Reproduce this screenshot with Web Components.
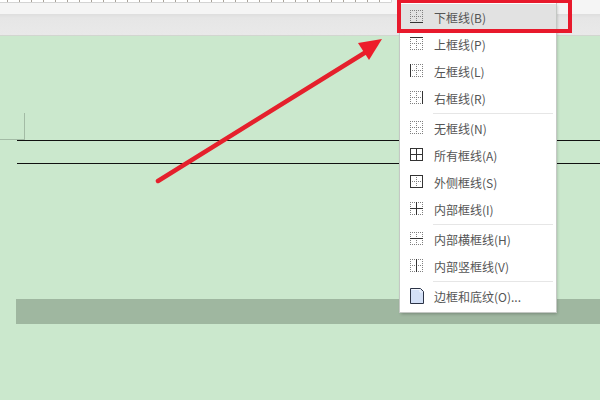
<!DOCTYPE html>
<html lang="zh">
<head>
<meta charset="utf-8">
<style>
  html, body { margin: 0; width: 600px; height: 400px; overflow: hidden; background: #cbe8cd; }
</style>
</head>
<body>
<word-window></word-window>

<script>
// Small border glyph: dotted grid, with the named edges drawn solid
class BorderIcon extends HTMLElement {
    connectedCallback() {
        let solid = (this.getAttribute('solid') || '').split(' ');
        let lines = {
            t: 'M0 .5H13', m: 'M0 6.5H13', b: 'M0 12.5H13',
            l: 'M.5 0V13', c: 'M6.5 0V13', r: 'M12.5 0V13'
        };
        let dotted = '';
        let full = '';
        for (let key in lines) {
            if (solid.includes(key)) {
                full += `<path d="${lines[key]}" stroke="#333" fill="none"/>`;
            } else {
                dotted += `<path d="${lines[key]}" stroke="#808080" stroke-dasharray="1 1" fill="none"/>`;
            }
        }
        let shadowDom = this.attachShadow({ mode: 'open' });
        shadowDom.innerHTML = `
            <style>
                :host { display: block; width: 13px; height: 13px; }
                svg { display: block; }
            </style>
            <svg width="13" height="13" viewBox="0 0 13 13" shape-rendering="crispEdges">${dotted}${full}</svg>`;
    }
}
customElements.define('border-icon', BorderIcon);

const itemTemplate = document.createElement('template');
itemTemplate.innerHTML = `
    <style>
        :host {
            display: flex;
            align-items: center;
            height: 27px;
            padding-left: 10px;
            box-sizing: border-box;
            color: #555;
        }
        :host([active]) { background: #e2e2e2; }
        .icon { width: 24px; flex: none; margin-top: -2px; }
    </style>
    <div class="icon"><slot name="icon"></slot></div>
    <span><slot></slot></span>`;

class MenuItem extends HTMLElement {
    constructor() {
        super();
        this.attachShadow({ mode: 'open' }).appendChild(itemTemplate.content.cloneNode(true));
    }
}
customElements.define('menu-item', MenuItem);

class MenuSeparator extends HTMLElement {
    constructor() {
        super();
        this.attachShadow({ mode: 'open' }).innerHTML = `
            <style>
                :host { display: block; height: 1px; margin: 1px 3px 1px 33px; background: #e6e6e6; }
            </style>`;
    }
}
customElements.define('menu-separator', MenuSeparator);

const menuTemplate = document.createElement('template');
menuTemplate.innerHTML = `
    <style>
        :host {
            position: absolute;
            left: 400px;
            top: 3px;
            width: 156px;
            height: 309px;
            box-sizing: border-box;
            padding-top: 1px;
            background: #fff;
            box-shadow: 0 0 0 1px #c4c8c4, 1px 2px 3px rgba(0,0,0,.25);
            font: 12px "Noto Sans CJK SC", "Liberation Sans", sans-serif;
        }
    </style>
    <slot></slot>`;

class BorderMenu extends HTMLElement {
    constructor() {
        super();
        this.attachShadow({ mode: 'open' }).appendChild(menuTemplate.content.cloneNode(true));
    }
}
customElements.define('border-menu', BorderMenu);

class RibbonBar extends HTMLElement {
    constructor() {
        super();
        this.attachShadow({ mode: 'open' }).innerHTML = `
            <style>
                :host { display: block; height: 36px; background: #f5f5f5; box-sizing: border-box; border-bottom: 1px solid #d2d6d0; }
                .ruler {
                    width: 392px;
                    height: 3px;
                    box-sizing: border-box;
                    border: solid #d4d4d4;
                    border-width: 0 1px 1px 0;
                    border-bottom-right-radius: 2px;
                    background: repeating-linear-gradient(90deg, #fff 0 7px, #a9a39a 7px 8px, #fff 8px 12px);
                }
                .tools { height: 11px; }
                .strip { height: 21px; background: linear-gradient(#dedede, #e6e6e6 4px, #e9e9e9); }
            </style>
            <div class="ruler"></div>
            <div class="tools"></div>
            <div class="strip"></div>`;
    }
}
customElements.define('ribbon-bar', RibbonBar);

class DocSheet extends HTMLElement {
    constructor() {
        super();
        this.attachShadow({ mode: 'open' }).innerHTML = `
            <style>
                :host { display: block; height: 364px; padding-top: 77px; box-sizing: border-box; background: #cbe8cd; }
                .corner { width: 24px; height: 26px; border: solid #a3bba5; border-width: 0 1px 1px 0; }
                .rows { height: 22px; margin-left: 17px; border: solid #111; border-width: 1px 0; }
                .band { height: 25px; margin: 135px 0 0 16px; background: #9fb7a0; }
            </style>
            <div class="corner"></div>
            <div class="rows"></div>
            <div class="band"></div>`;
    }
}
customElements.define('doc-sheet', DocSheet);

// Red hand-drawn annotation on top of the screenshot: box round first item and the arrow
class RedCallout extends HTMLElement {
    constructor() {
        super();
        this.attachShadow({ mode: 'open' }).innerHTML = `
            <style>
                :host { position: absolute; left: 0; top: 0; width: 600px; height: 400px; pointer-events: none; }
                svg { display: block; }
            </style>
            <svg width="600" height="400" viewBox="0 0 600 400">
                <rect x="399" y="1" width="171" height="30" fill="none" stroke="#e8192c" stroke-width="4"/>
                <path d="M158 181L366 52" stroke="#e5202c" stroke-width="4.5" stroke-linecap="round" fill="none"/>
                <path d="M382 39L358 43L369 60Z" fill="#ed1c2a"/>
            </svg>`;
    }
}
customElements.define('red-callout', RedCallout);

class WordWindow extends HTMLElement {
    constructor() {
        super();
        let shadowDom = this.attachShadow({ mode: 'open' });
        shadowDom.innerHTML = `
            <style>
                :host { display: block; position: relative; width: 600px; height: 400px; overflow: hidden; }
                .page { display: block; }
            </style>
            <ribbon-bar></ribbon-bar>
            <doc-sheet></doc-sheet>
            <border-menu>
                <menu-item active><border-icon slot="icon" solid="b"></border-icon>下框线(B)</menu-item>
                <menu-item><border-icon slot="icon" solid="t"></border-icon>上框线(P)</menu-item>
                <menu-item><border-icon slot="icon" solid="l"></border-icon>左框线(L)</menu-item>
                <menu-item><border-icon slot="icon" solid="r"></border-icon>右框线(R)</menu-item>
                <menu-separator></menu-separator>
                <menu-item><border-icon slot="icon"></border-icon>无框线(N)</menu-item>
                <menu-item><border-icon slot="icon" solid="t m b l c r"></border-icon>所有框线(A)</menu-item>
                <menu-item><border-icon slot="icon" solid="t b l r"></border-icon>外侧框线(S)</menu-item>
                <menu-item><border-icon slot="icon" solid="m c"></border-icon>内部框线(I)</menu-item>
                <menu-separator></menu-separator>
                <menu-item><border-icon slot="icon" solid="m"></border-icon>内部横框线(H)</menu-item>
                <menu-item><border-icon slot="icon" solid="c"></border-icon>内部竖框线(V)</menu-item>
                <menu-separator></menu-separator>
                <menu-item>
                    <svg slot="icon" class="page" width="14" height="16" viewBox="0 0 14 16">
                        <path d="M.5 .5H10.5L13.5 3.5V15.5H.5Z" fill="#d3e0f7" stroke="#2b3346"/>
                        <path d="M1.5 1.5H10V4H12.5" fill="none" stroke="#f2f6fd"/>
                    </svg>
                    边框和底纹(O)...
                </menu-item>
            </border-menu>
            <red-callout></red-callout>`;
    }
}
customElements.define('word-window', WordWindow);
</script>
</body>
</html>
